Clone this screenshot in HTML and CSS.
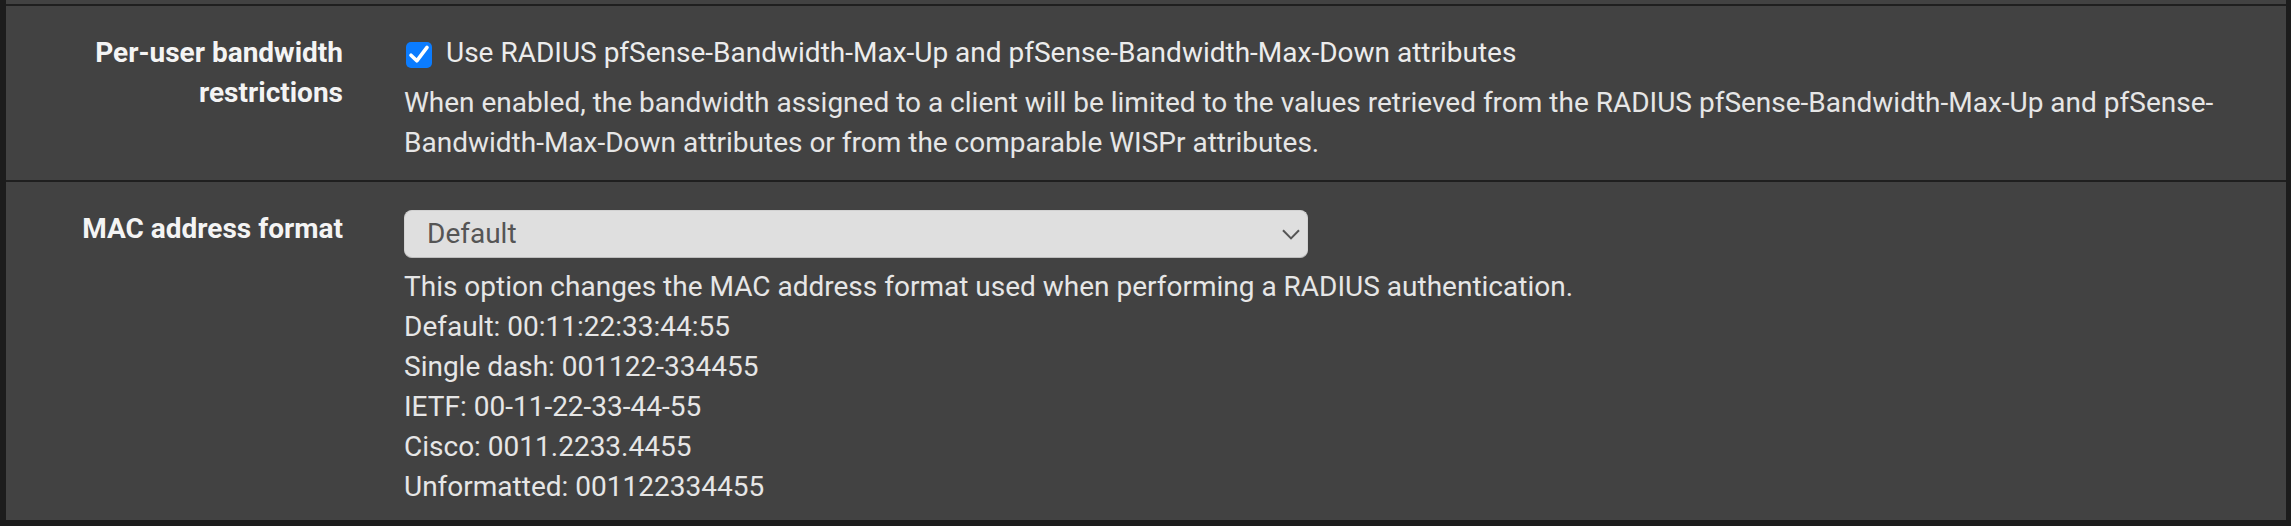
FILE: index.html
```html
<!DOCTYPE html>
<html lang="en">
<head>
<meta charset="utf-8">
<title>Captive Portal RADIUS options</title>
<link rel="stylesheet" href="styles.css">
</head>
<body>
<div class="panel">
  <div class="form-row form-row--first">
    <div class="form-label">Per-user bandwidth restrictions</div>
    <div class="form-field">
      <label class="checkbox">
        <span class="checkbox-box">
          <svg width="26" height="26" viewBox="0 0 26 26" aria-hidden="true">
            <path d="M5 13.2 L10.8 18.8 L21 5.4" fill="none" stroke="#ffffff" stroke-width="3.6" stroke-linecap="round" stroke-linejoin="round"/>
          </svg>
        </span>
        <span class="checkbox-text">Use RADIUS pfSense-Bandwidth-Max-Up and pfSense-Bandwidth-Max-Down attributes</span>
      </label>
      <p class="help">When enabled, the bandwidth assigned to a client will be limited to the values retrieved from the RADIUS pfSense-Bandwidth-Max-Up and pfSense-Bandwidth-Max-Down attributes or from the comparable WISPr attributes.</p>
    </div>
  </div>
  <div class="form-row form-row--last">
    <div class="form-label">MAC address format</div>
    <div class="form-field">
      <div class="select">
        <span class="select-value">Default</span>
        <svg class="select-caret" width="18" height="11" viewBox="0 0 18 11" aria-hidden="true">
          <path d="M1 1.2 L9 9.4 L17 1.2" fill="none" stroke="#555555" stroke-width="2"/>
        </svg>
      </div>
      <p class="help help--select">This option changes the MAC address format used when performing a RADIUS authentication.<br>Default: 00:11:22:33:44:55<br>Single dash: 001122-334455<br>IETF: 00-11-22-33-44-55<br>Cisco: 0011.2233.4455<br>Unformatted: 001122334455</p>
    </div>
  </div>
</div>
</body>
</html>
```
FILE: styles.css
```css
html, body {
  margin: 0;
  padding: 0;
}

body {
  background: #1c1c1c;
  font-family: Roboto, "Liberation Sans", Arial, sans-serif;
  font-size: 28px;
  line-height: 40px;
  color: #e8e8e8;
}

.panel {
  margin-left: 6px;
  width: 2280px;
  background: #424242;
  padding-top: 4px;
}

.form-row {
  display: grid;
  grid-template-columns: 337px 1852px;
  column-gap: 61px;
  border-top: 2px solid #1f1f1f;
  padding-top: 27px;
}

.form-row--first {
  padding-bottom: 17px;
}

.form-row--last {
  padding-bottom: 13px;
}

.form-label {
  text-align: right;
  font-weight: 700;
  color: #f4f4f4;
}

.form-field {
  min-width: 0;
}

.checkbox {
  display: flex;
  align-items: flex-start;
  gap: 14px;
  padding-left: 2px;
  color: #ececec;
}

.checkbox-box {
  flex: none;
  width: 26px;
  height: 26px;
  margin-top: 9px;
  border-radius: 5px;
  background: #0b7cff;
  display: flex;
}

.help {
  margin: 10px 0 0;
  color: #e6e6e6;
}

.help--select {
  margin-top: 9px;
}

.select {
  box-sizing: border-box;
  width: 904px;
  height: 48px;
  margin-top: 1px;
  display: flex;
  align-items: center;
  justify-content: space-between;
  padding: 0 7px 0 22px;
  background: #dfdfdf;
  border: 1px solid #d2d2d2;
  border-bottom-color: #bdbdbd;
  border-radius: 8px;
  color: #555555;
  line-height: 46px;
}

.select-caret {
  flex: none;
  margin-top: 0;
}
```
